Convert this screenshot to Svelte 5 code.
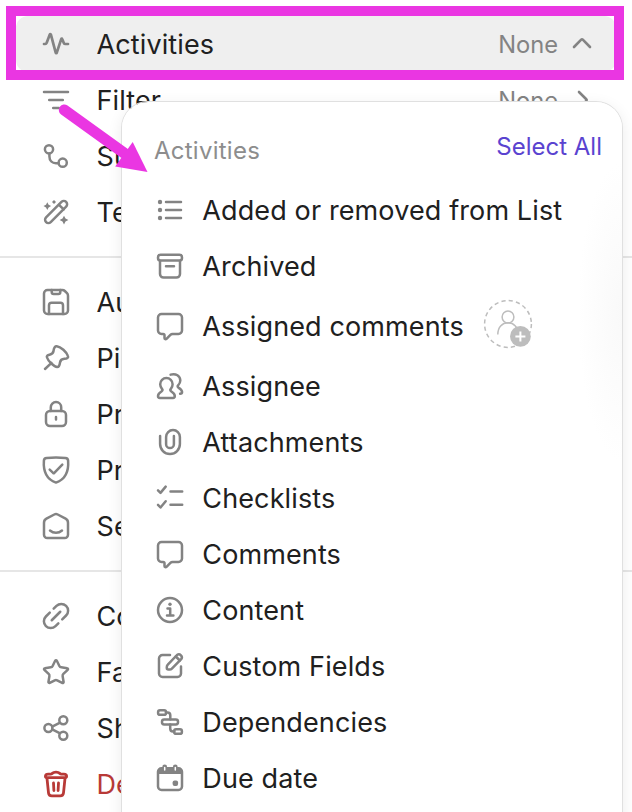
<script>
  const groups = [
    [
      { icon: 'pulse', label: 'Activities', value: 'None', open: true },
      { icon: 'filter', label: 'Filter', value: 'None' },
      { icon: 'status', label: 'Su' },
      { icon: 'wand', label: 'Te' }
    ],
    [
      { icon: 'save', label: 'Au' },
      { icon: 'pin', label: 'Pi' },
      { icon: 'lock', label: 'Pr' },
      { icon: 'shield', label: 'Pr' },
      { icon: 'home', label: 'Se' }
    ],
    [
      { icon: 'link', label: 'Co' },
      { icon: 'star', label: 'Fa' },
      { icon: 'share', label: 'Sh' },
      { icon: 'trash', label: 'De', danger: true }
    ]
  ];
  const activities = [
    { icon: 'list', label: 'Added or removed from List' },
    { icon: 'archive', label: 'Archived' },
    { icon: 'comment', label: 'Assigned comments', assign: true },
    { icon: 'people', label: 'Assignee' },
    { icon: 'clip', label: 'Attachments' },
    { icon: 'checks', label: 'Checklists' },
    { icon: 'comment', label: 'Comments' },
    { icon: 'info', label: 'Content' },
    { icon: 'edit', label: 'Custom Fields' },
    { icon: 'deps', label: 'Dependencies' },
    { icon: 'calendar', label: 'Due date' }
  ];
</script>

{#snippet glyph(name)}
  <svg class="icon" viewBox="0 0 32 32" aria-hidden="true">
    {#if name === 'pulse'}
      <path d="M4 16h1.2c.8 0 1.200-.4 1.400-1.100L9.800 6.600c.3-.8.900-.8 1.100 0l4.800 18c.2.800.9.800 1.100 0l4.400-13.400c.3-.8.800-.8 1.100 0l1.500 3.700c.3.700.8 1.100 1.600 1.100H28" stroke-width="2.700" />
    {:else if name === 'filter'}
      <path d="M4 8h24M9.200 16h13.600M13.200 24h5.600" />
    {:else if name === 'status'}
      <circle cx="9" cy="9.300" r="4.100" /><circle cx="22.700" cy="22.700" r="4.100" />
      <path d="M9.400 13.500v2.700c0 4.600 2.800 7 6.600 7h2.500" />
    {:else if name === 'wand'}
      <rect x="1.900" y="12.700" width="28.400" height="6.600" rx="3.300" transform="rotate(-45 16.100 16)" />
      <path d="m19 8.800 4.700 4.600" />
      <g class="solid">
        <path d="M7.300 6.300 8.600 8.800l2.500 1.300-2.500 1.300-1.300 2.500L6 11.400l-2.500-1.300L6 8.800Z" />
        <path d="m24 19.700 1.500 2.900 2.900 1.400-2.900 1.500L24 28.400l-1.500-2.900-2.900-1.500 2.900-1.400Z" />
        <path d="m14 4 2 1.900-2 2-2-2Z" />
      </g>
    {:else if name === 'save'}
      <path d="M7.500 4h14.800c1 0 1.800.3 2.500 1L27 7.200c.7.700 1 1.500 1 2.500v14.800a3.500 3.500 0 0 1-3.500 3.500h-17A3.500 3.500 0 0 1 4 24.500v-17A3.500 3.500 0 0 1 7.500 4Z" />
      <path d="M11.700 4v2c0 1.300.7 2 2 2h4.600c1.300 0 2-.7 2-2V4M9 28v-8.700c0-1.700 1-2.600 2.600-2.600h8.800c1.600 0 2.600.9 2.600 2.600V28" />
    {:else if name === 'pin'}
      <path d="M5 27l6.500-6.200M7 15.500c-.7-1.500.6-2.200 2.500-2.700 2.300-.6 3.700-1.600 4-3.800.4-3 1.300-5 3.300-4.800 4 .4 9.800 5.700 11.200 9.900.6 1.600-.8 2.500-3.600 2.700-2.700.2-4 1.200-4.400 3.700-.4 3.200-1.200 4.600-2.900 4.500-3-.2-9-6-10.100-9.500Z" />
    {:else if name === 'lock'}
      <rect x="6" y="13" width="20" height="15" rx="4" />
      <path d="M10.800 13V9.200a5.200 5.200 0 0 1 10.400 0V13M16 19v2.600" />
    {:else if name === 'shield'}
      <path d="M3.900 6.600c.1-1.700 1-2.600 2.700-2.700 6.300-.4 12.500-.4 18.800 0 1.700.1 2.600 1 2.700 2.700C28.900 17.500 25.500 25.300 16 28.600 6.500 25.300 3.100 17.500 3.900 6.600ZM9.700 15.700l3.400 3.200c.4.300.8.300 1.200 0l8-8.300" />
    {:else if name === 'home'}
      <path d="M4 12.800c0-2.100.7-3.200 2.400-4.100l7.900-4.200c1.200-.6 2.200-.6 3.400 0l7.900 4.200c1.700.9 2.400 2 2.400 4.100v11.900a3.300 3.300 0 0 1-3.300 3.300H7.300A3.300 3.300 0 0 1 4 24.700ZM10 20.500c3.400 3 8.600 3 12 0" />
    {:else if name === 'link'}
      <g transform="translate(16 16) rotate(-45)">
        <path d="M3.500-6.800h4a6.800 6.800 0 0 1 0 13.600H2M-3.500 6.800h-4a6.800 6.800 0 0 1 0-13.600H-2M-6 0H6" />
      </g>
    {:else if name === 'star'}
      <path transform="translate(1.600 1.800) scale(1.200)" stroke-width="2.080" d="M11.300 2.500a.8.800 0 0 1 1.400 0l2.100 4.300a2.100 2.100 0 0 0 1.600 1.160l4.900.7a.8.800 0 0 1 .44 1.400l-3.600 3.400a2.100 2.100 0 0 0-.6 1.880l.8 4.800a.8.800 0 0 1-1.200.8l-4.200-2.200a2.100 2.100 0 0 0-1.960 0L6.800 20.940a.8.800 0 0 1-1.100-.8l.8-4.800a2.100 2.100 0 0 0-.6-1.880L2.300 10.060a.8.800 0 0 1 .44-1.400l4.900-.7A2.100 2.100 0 0 0 9.200 6.800Z" />
    {:else if name === 'share'}
      <circle cx="8.400" cy="16" r="4" /><circle cx="23.300" cy="8.300" r="4" /><circle cx="23.300" cy="23.700" r="4" />
      <path d="m12.200 14.600 7.400-3.800M12.200 17.400l7.400 3.800" />
    {:else if name === 'trash'}
      <path stroke-width="2.800" d="M5.400 8.300c0-1.500 1-2.200 2.700-2.200h2.500c.7 0 1.100-.2 1.600-.7.900-.8 2-1.200 3.800-1.200s2.900.4 3.800 1.200c.5.500.9.700 1.600.7h2.500c1.700 0 2.700.7 2.700 2.200 0 .8-.5 1.400-1.600 1.400H7c-1.100 0-1.600-.6-1.600-1.400ZM7 10.300l1.500 14.500c.2 2.100 1.200 3 3.300 3h8.400c2.100 0 3.100-.9 3.300-3L25 10.300M13.500 15l.4 7.500M18.500 15l-.4 7.500" />
    {:else if name === 'list'}
      <path d="M12 8h15M12 16h15M12 24h15" />
      <g class="solid"><circle cx="6" cy="8" r="2.200" /><circle cx="6" cy="16" r="2.200" /><circle cx="6" cy="24" r="2.200" /></g>
    {:else if name === 'archive'}
      <rect x="4" y="4.800" width="24" height="5.800" rx="2.600" />
      <path d="M6 11v13a3.600 3.600 0 0 0 3.600 3.600h12.800A3.600 3.600 0 0 0 26 24V11M12 16.200h8" />
    {:else if name === 'comment'}
      <path d="M7.500 4h17A3.500 3.500 0 0 1 28 7.500v13a3.500 3.500 0 0 1-3.500 3.500h-6c-.9 0-1.500.3-2.100.9l-3.900 3.900c-.8.800-2 .5-2-.8v-2.700c0-.9-.4-1.300-1.300-1.300H7.500A3.500 3.500 0 0 1 4 20.500v-13A3.500 3.500 0 0 1 7.500 4Z" />
    {:else if name === 'people'}
      <path d="M12.400 8a6.200 6.200 0 0 0-6.200 6.200c0 2.200.8 3.600 1.900 4.900.6.800.4 1.500-.4 2.100C5.500 22.600 4 24 4 26.100c0 1.200.6 1.900 1.800 1.900h13.200c1.200 0 1.800-.7 1.800-1.900 0-2.100-1.500-3.500-3.700-4.900-.8-.6-1-1.300-.4-2.100 1.100-1.300 1.900-2.700 1.900-4.900A6.200 6.200 0 0 0 12.400 8ZM16.600 4.600c5.300-1.500 9.700 1.300 9.700 6 0 2.100-.9 3.500-2.200 4.800-.8.800-.5 1.600.3 2.200 2.200 1.400 3.700 2.700 3.700 4.500 0 1.100-.7 1.700-2 1.700" />
    {:else if name === 'clip'}
      <path d="M6.100 10v8c0 5.600 4.300 10 9.900 10s9.900-4.400 9.900-10v-7.100a6.900 6.900 0 0 0-13.800 0v7.300a3.900 3.900 0 0 0 7.800 0V10" />
    {:else if name === 'checks'}
      <path d="m4 8.300 2.500 2.600 5.200-6.300M4 22.900l2.500 2.600 5.200-6.300M16.500 9.400h11.700M16.500 22.700h11.700" />
    {:else if name === 'info'}
      <circle cx="16" cy="16" r="12" /><path d="M13.500 14.400h2.700v7M13 21.500h6.400" />
      <circle class="solid" cx="16" cy="10.200" r="1.700" />
    {:else if name === 'edit'}
      <path d="M16 5H8.500A3.500 3.500 0 0 0 5 8.500v15A3.500 3.500 0 0 0 8.500 27h15a3.500 3.500 0 0 0 3.500-3.500v-7M21.800 6.500l4 4" />
      <path d="m13.800 14.700 9.200-9.700a3 3 0 0 1 4.200 4.200l-9.300 9.400c-.7.700-1.400.9-2.300.9h-1.300c-1 0-1.500-.5-1.500-1.500v-1.100c0-.9.300-1.500 1-2.200Z" />
    {:else if name === 'deps'}
      <rect x="4.100" y="4.200" width="7.900" height="4.600" rx="1.900" /><rect x="8" y="13.500" width="16" height="4.900" rx="2.200" /><rect x="20.200" y="23.200" width="7.700" height="4.600" rx="1.900" />
      <path d="M12 6.500h1.500c2 0 2.800 1 2.800 2.800v4M16.200 18.600v4c0 2 .8 3 2.800 3h1.200" />
    {:else if name === 'calendar'}
      <rect x="4" y="6.300" width="24" height="21.700" rx="3.500" />
      <path class="solid" d="M4 12V9.500A3.500 3.500 0 0 1 7.500 6h17A3.500 3.500 0 0 1 28 9.500V12Z" />
      <path d="M10.700 5v3.400M21.300 5v3.400" stroke-width="4.800" />
      <path class="slot" d="M10.700 5.400v2.700M21.300 5.400v2.700" />
      <rect class="solid" x="18.600" y="18.600" width="5.500" height="5.500" rx="2" />
    {/if}
  </svg>
{/snippet}

<main>
  <nav>
    {#each groups as group}
      <div class="group">
        {#each group as row}
          <div class="row" class:open={row.open} class:danger={row.danger}>
            {@render glyph(row.icon)}
            <span class="label">{row.label}</span>
            {#if row.value}
              <span class="value">{row.value}</span>
              <svg class="chevron" viewBox="0 0 24 24">
                <path d={row.open ? 'm4 15 7.200-7.300c.5-.5 1.100-.5 1.600 0L20 15' : 'm9 4 7.300 7.200c.5.500.5 1.100 0 1.600L9 20'} />
              </svg>
            {/if}
          </div>
        {/each}
      </div>
    {/each}
  </nav>

  <section class="menu">
    <header><h2>Activities</h2><a href="#all">Select All</a></header>
    {#each activities as item}
      <div class="item" class:tall={item.assign}>
        {@render glyph(item.icon)}
        <span class="label">{item.label}</span>
        {#if item.assign}
          <svg class="assign" viewBox="0 0 50 50">
            <circle cx="25" cy="25" r="23.400" stroke-dasharray="4.200 3.150" />
            <circle cx="25" cy="18" r="5.900" />
            <path d="M14.800 35.500c0-7.300 4.200-11.700 10.200-11.700s10.200 4.400 10.200 11.700" />
            <circle class="badge" cx="37.400" cy="37.400" r="10.400" />
            <path class="plus" d="M32.400 37.400h10M37.400 32.400v10" />
          </svg>
        {/if}
      </div>
    {/each}
  </section>

  <div class="frame"></div>
  <svg class="arrow" viewBox="0 0 100 80">
    <path d="M10.300 16 70 59" /><path class="head" d="M78.700 48 93.500 78 61.200 72.500Z" />
  </svg>
</main>

<style>
  :global(body) { margin: 0; background: #fff; }
  main {
    position: relative;
    width: 632px;
    height: 812px;
    overflow: hidden;
    background: #fff;
    color: #202020;
    font: 400 27px/32px Inter, "Liberation Sans", sans-serif;
  }
  nav { padding-top: 16px; }
  .group + .group { margin-top: 16px; padding-top: 16px; border-top: 2px solid #e6e6e6; }
  .row {
    display: flex;
    align-items: center;
    height: 56px;
    box-sizing: border-box;
    margin: 0 16px;
    padding: 0 22px 0 24px;
    border-radius: 12px;
  }
  .open { background: #efefef; }
  .danger { color: #b83a37; }
  .label { white-space: nowrap; letter-spacing: 0.120px; padding-top: 2px; }
  .row .label { margin-left: 24.500px; flex: 1; }
  .value { color: #838383; font-size: 23.700px; padding-top: 2px; }
  .icon {
    width: 32px;
    height: 32px;
    flex: none;
    fill: none;
    stroke: #838383;
    stroke-width: 2.500;
    stroke-linecap: round;
    stroke-linejoin: round;
  }
  .danger .icon { stroke: #b83a37; }
  .solid { fill: #838383; stroke: none; }
  .slot { stroke: #fff; stroke-width: 1.500; }
  .chevron {
    width: 24px;
    height: 24px;
    margin-left: 12px;
    fill: none;
    stroke: #838383;
    stroke-width: 2.600;
    stroke-linecap: round;
  }
  .menu {
    position: absolute;
    left: 122px;
    top: 102px;
    width: 500px;
    height: 760px;
    border-radius: 26px;
    background: radial-gradient(ellipse 44px 150px at 100% 210px, #f9f9f9, #fff);
    box-shadow: 0 0 0 1px #e0e0e0, 0 4px 16px rgba(0, 0, 0, 0.09);
  }
  header {
    display: flex;
    justify-content: space-between;
    height: 80px;
    box-sizing: border-box;
    padding: 29px 20px 0 32px;
  }
  h2 { margin: 4px 0 0; font-size: 24px; font-weight: 400; line-height: 32px; letter-spacing: 0.250px; color: #8d8d8d; }
  a { color: #5a43d0; font-size: 24px; text-decoration: none; }
  .item { display: flex; align-items: center; height: 56px; padding-left: 32px; }
  .item .label { margin-left: 16.300px; }
  .tall { height: 64px; }
  .assign { width: 50px; height: 50px; margin: -5px 0 0 19px; fill: none; stroke: #bdbdbd; stroke-width: 1.500; }
  .badge { fill: #bdbdbd; stroke: none; }
  .plus { stroke: #fff; stroke-width: 2; }
  .frame {
    position: absolute;
    left: 6px;
    top: 6px;
    width: 618px;
    height: 74px;
    box-sizing: border-box;
    border: 10px solid #ea36e2;
  }
  .arrow {
    position: absolute;
    left: 54px;
    top: 94px;
    width: 100px;
    height: 80px;
    stroke: #ea36e2;
    stroke-width: 11;
    stroke-linecap: round;
  }
  .head { fill: #ea36e2; stroke: none; }
</style>
